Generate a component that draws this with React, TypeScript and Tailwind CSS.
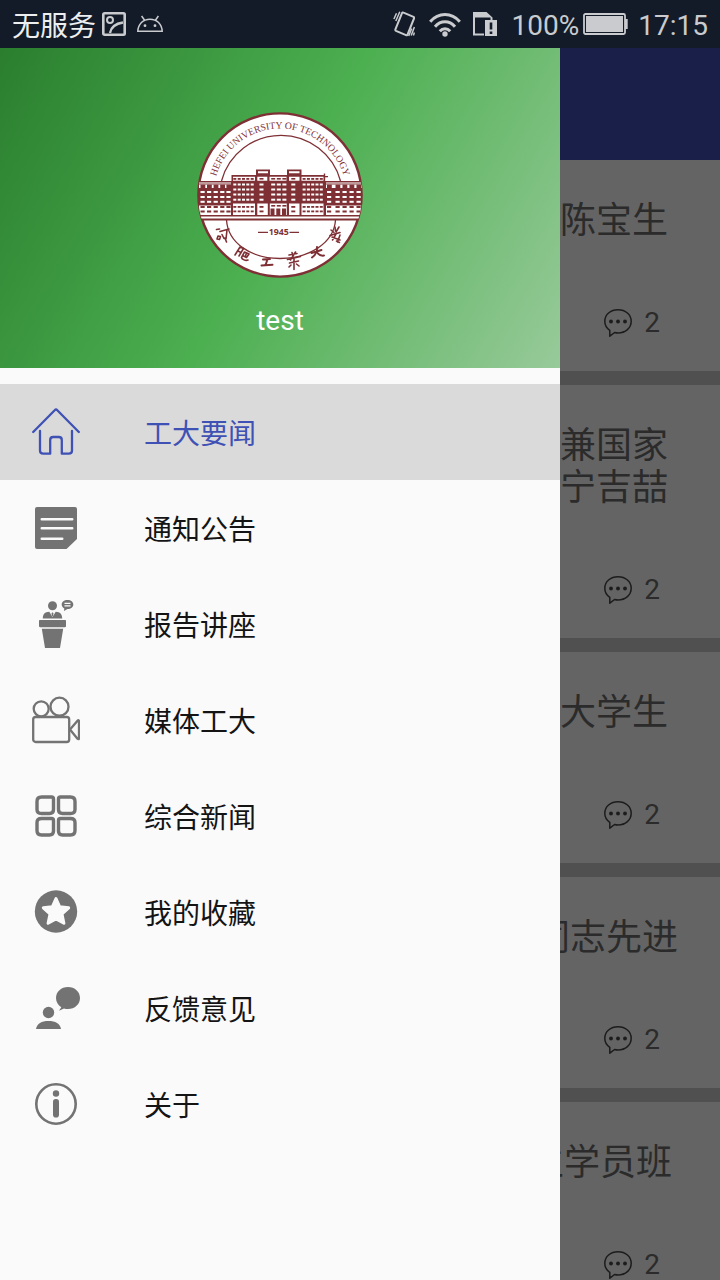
import React from 'react';

const INK = '#7f3035';

function SignalPicture() {
  return (
    <svg viewBox="0 0 24 24" className="size-6" fill="none" stroke="currentColor" strokeWidth="2.6">
      <rect x="1.3" y="1.3" width="21.4" height="21.4" rx="1.2" />
      <circle cx="8" cy="8" r="3" strokeWidth="2" />
      <path d="M8 21C9 15.500 14 11.500 21 10.500" strokeWidth="2.400" />
    </svg>
  );
}

function AndroidHead() {
  return (
    <svg viewBox="0 0 26 18" className="h-[18px] w-[26px]" fill="none" stroke="currentColor" strokeWidth="1.5">
      <path d="M.8 16.3h24.4C24.800 9.200 20 4.200 13 4.200S1.200 9.200.8 16.300z" />
      <path d="M4.600 1l3 4.200M21.400 1l-3 4.200" />
      <circle cx="8" cy="10.700" r="1.400" fill="currentColor" stroke="none" />
      <circle cx="18" cy="10.700" r="1.400" fill="currentColor" stroke="none" />
    </svg>
  );
}

function Vibrate() {
  return (
    <svg viewBox="0 0 22 26" className="h-[26px] w-[22px]" fill="none" stroke="currentColor" strokeWidth="1.500">
      <path d="M10.500 1.600l10 4.200c.6.300.8.800.6 1.400l-6.600 16.400c-.3.700-.9.900-1.500.6l-10-4.400c-.6-.3-.8-.8-.6-1.400l6.600-16.200c.3-.7.900-.9 1.500-.6z" strokeWidth="2" />
      <path d="M6.800.8L2.800 10M3.500 2.300L.9 8M21.400 16l-3.200 8.500M18.700 17.500l-3 7.500M21.400 21.500l-1 3" />
    </svg>
  );
}

function Wifi() {
  return (
    <svg viewBox="0 0 32 25" className="h-[25px] w-8" fill="none" stroke="currentColor" strokeWidth="3">
      <path d="M1.200 9.800C9.500.2 22.500.2 30.800 9.800M6 14.800c5.700-6.600 14.300-6.600 20 0M10.800 19.300c3-3.500 7.400-3.500 10.400 0" />
      <circle cx="16" cy="22" r="2.700" fill="currentColor" stroke="none" />
    </svg>
  );
}

function SimAlert() {
  return (
    <svg viewBox="0 0 24 24" className="size-6">
      <path d="M0 0h13.500l6 5.500V9h-2V5.500H2v16h9V23.500H0z" fill="currentColor" />
      <rect x="12" y="8" width="12" height="16" fill="currentColor" />
      <path d="M18 10.500v7M18 19.500V22" stroke="#131b28" strokeWidth="2.600" />
    </svg>
  );
}

function Battery() {
  return (
    <svg viewBox="0 0 45 22" className="h-[22px] w-[45px]">
      <rect x="1" y="1" width="41" height="20" rx="1.500" fill="none" stroke="currentColor" strokeWidth="1.800" />
      <rect x="3" y="3" width="37" height="16" fill="currentColor" />
      <path d="M42 6h2.700v10H42z" fill="currentColor" />
    </svg>
  );
}

function StatusBar() {
  return (
    <header className="flex h-12 shrink-0 items-center bg-[#131b28] px-3 font-['Roboto',sans-serif] text-[28px] leading-8 text-[#c9cbce]">
      <span className="font-['Noto_Sans_CJK_SC',sans-serif] text-[#eceef0]">无服务</span>
      <span className="ml-1.5"><SignalPicture /></span>
      <span className="ml-[11px]"><AndroidHead /></span>
      <span className="ml-auto"><Vibrate /></span>
      <span className="ml-3.5"><Wifi /></span>
      <span className="ml-3"><SimAlert /></span>
      <span className="ml-[15px] pt-1">100%</span>
      <span className="ml-1"><Battery /></span>
      <time className="ml-2.5 pt-1">17:15</time>
    </header>
  );
}

/* The university seal, drawn on an 180-unit square. */
function Seal() {
  const cols = (xs: number[], ys: number[], w: number, h: number) =>
    ys.flatMap((y) => xs.map((x) => <rect key={`${x}-${y}`} x={x} y={y} width={w} height={h} />));
  const sides = [43.3, 47.7, 52, 56.3, 60.7, 112.6, 116.9, 121.2, 125.5, 129.8];
  const middle = [69.5, 81.2, 86.8, 92.4, 101.3];
  const wings = [10.5, 17, 23.600, 30.200, 36.400, 137, 145.500, 152.500, 159.500, 166.500];
  return (
    <svg viewBox="0 0 180 180" className="size-[180px]" role="img" aria-label="Hefei University of Technology">
      <defs>
        <path id="seal-arc" d="M23.500 90A66.500 66.500 0 0 1 156.500 90" />
        <clipPath id="seal-clip"><circle cx="90" cy="90" r="82" /></clipPath>
      </defs>
      <circle cx="90" cy="90" r="81.600" fill="#fff" stroke={INK} strokeWidth="2.400" />
      <g fill="none" stroke={INK} strokeWidth="1.300">
        <path d="M31.500 76A61.600 61.600 0 0 1 150.500 76" />
        <path d="M36.500 115C38 138 61 153.500 90 153.500S144 138 145.500 115" />
      </g>
      <text fill={INK} fontSize="9.700" fontFamily="Liberation Serif, serif" textAnchor="middle">
        <textPath href="#seal-arc" startOffset="50%">HEFEI UNIVERSITY OF TECHNOLOGY</textPath>
      </text>
      <g clipPath="url(#seal-clip)">
        <path d="M6 76h168v39.500H6z" fill={INK} />
        <g fill="#fff">
          <path d="M9 77.600h32v1H9zM136 77.600h36v1h-36z" />
          <path d="M9 79.600h32v3.400H9zM136 79.600h36v3.400h-36z" />
          {cols(wings, [86, 91, 95.800], 4.200, 2)}
          <path d="M9 100.500h32V110H9zM136 100.500h36V110h-36z" />
          <path d="M6 111.500h168v2H6z" />
        </g>
        <g fill={INK}>
          {cols(wings, [79.600], 4.800, 3.400)}
          {cols(wings, [101, 105.500], 4.200, 2)}
        </g>
      </g>
      <g fill={INK}>
        <path d="M41.500 70H135v41H41.500z" />
        <path d="M66 64.600h14v6H66zM97 64.600h14.500v6H97z" />
        <path d="M133.800 68.500h1.400v8h-1.400zM132 71h6v1.300h-6z" />
      </g>
      <g fill="#fff">
        <path d="M68 66.200h10v2H68zM99 66.200h10.500v2H99z" />
        <path d="M43 71.800h22v4H43zM67.300 71.800h10v4h-10zM79.500 71.800h17v4h-17zM99 71.800h10.500v4H99zM111.500 71.800h22v4h-22z" />
        {cols(sides, [78.500, 83.500, 88.500, 93.700], 3, 2)}
        {cols(middle, [78.500, 83.500, 88.500, 93.700], 4, 2)}
        <path d="M43 98.500h22V110H43zM67.300 98.500h10.500V110H67.300zM79.800 98.500h17V110h-17zM99 98.500h10.500V110H99zM111.500 98.500h22V110h-22z" />
      </g>
      <g fill={INK}>
        {cols(sides, [73, 101, 105.500], 3, 1.800)}
        {cols(middle, [73], 4, 1.600)}
        {cols([69.500, 101.300], [101, 105.500], 4, 1.800)}
        {cols([81.200, 86.800, 92.400], [100], 4, 1.600)}
        <path d="M80.500 103.500h4v7h-4zM86.300 103.500h4v7h-4zM92 103.500h4v7h-4z" />
      </g>
      <path d="M68 127.400h10M99.500 127.400h9.500" stroke={INK} strokeWidth="1.200" />
      <text x="88.700" y="130.300" textAnchor="middle" fontSize="8.800" fontWeight="700" fontFamily="Noto Sans, sans-serif" fill={INK}>1945</text>
      <g fill="none" stroke={INK} strokeWidth="1.600" strokeLinecap="round" strokeLinejoin="round">
        <path d="M26.500 124.500l3-.5M30 126.500l9-2.500M37 125l-1 9M35 133l1.500 4M28 131l-1 3 2.500.5 1-3zM32 129.500l2 4" />
        <path d="M50 142l-5 8M50 142l3.500 1.500L49 151M48 146l3 1.500M54.500 147l4.500 2-2.500 3.500-4-2M54.500 147l-3 5.500c.5 2 4 3.500 6.500 2.500M56.500 148l-1 3" />
        <path d="M73 154.500l7-.5M77.500 154.500l-2 5.500M71.500 160.500l11-.8" strokeWidth="2" />
        <path d="M99 150l8-1.500M102 147.500l1 4M97.500 154.500l13-3M99.500 158l9-2M105.500 147l-5 8M104 154v10.500M101 160l-2 2M106.500 159l2.500 2" />
        <path d="M121.500 148l10-3M127 142c.5 4-1.500 8-5 10.500M127 147.500c2 2.500 4.500 3.500 7 3" strokeWidth="2" />
        <path d="M141 125l3 2.500M145 122l.5 4M149 122l-3 5M140 130.500l10-3M146 129l-3.500 6M142 132l8 3M150 130l-2.500 7M146.500 136l3 1.500" />
      </g>
    </svg>
  );
}

function HomeIcon() {
  return (
    <svg viewBox="0 0 48 48" className="size-12" fill="none" stroke="currentColor" strokeWidth="2.300" strokeLinecap="round" strokeLinejoin="round">
      <path d="M1.200 24L22.700 2.200c.8-.8 1.800-.8 2.600 0L46.800 24" />
      <path d="M8 23v19.500c0 2 1.200 3.200 3.200 3.200h7V32c0-2 1-3 3-3h5.600c2 0 3 1 3 3v13.700h7c2 0 3.200-1.200 3.200-3.200V23" />
    </svg>
  );
}

function NoticeIcon() {
  return (
    <svg viewBox="0 0 48 48" className="size-12">
      <path d="M5 3h38a2 2 0 0 1 2 2v30L34.500 45H5a2 2 0 0 1-2-2V5a2 2 0 0 1 2-2z" fill="currentColor" />
      <path d="M9.800 15.200h30.400M9.800 24.200h30.400M9.800 34.800h20.400" stroke="#fafafa" strokeWidth="2.600" strokeLinecap="round" />
    </svg>
  );
}

function LectureIcon() {
  return (
    <svg viewBox="0 0 48 48" className="size-12" fill="currentColor">
      <circle cx="20.500" cy="5.700" r="4.500" />
      <path d="M10.800 18.500c0-4.500 2-6.500 6.500-6.800l3.200 5.300 3.200-5.300c4.500.3 6.500 2.300 6.500 6.800z" />
      <path d="M20.500 12.300l-1 1 .5 3h1l.5-3z" />
      <path d="M8 20h25c.6 0 1 .4 1 1v5c0 .8-.4 1.200-1 1.200H8c-.6 0-1-.4-1-1.200v-5c0-.6.400-1 1-1zM9.800 28.700h21.400L28 48H13z" />
      <path d="M35.500 0C39 0 41.300 1.900 41.300 4.500S39 9 35.500 9L32 11l.3-2.500C30.700 7.700 29.700 6.300 29.700 4.500 29.700 1.900 32 0 35.500 0z" />
      <path d="M32.500 3.300h6M32.500 5.800h6" stroke="#fafafa" strokeWidth="1.200" />
    </svg>
  );
}

function CameraIcon() {
  return (
    <svg viewBox="0 0 48 48" className="size-12" fill="none" stroke="currentColor" strokeWidth="2.300" strokeLinejoin="round">
      <circle cx="9.200" cy="12.800" r="7.500" />
      <circle cx="27.500" cy="10.700" r="9" />
      <rect x="1.200" y="21" width="36" height="25" rx="2.500" />
      <path d="M38 33.500l7.500-8.800c.8-.8 1.500-.4 1.500.5v17c0 1-.7 1.300-1.500.5z" />
    </svg>
  );
}

function GridIcon() {
  return (
    <svg viewBox="0 0 48 48" className="size-12" fill="none" stroke="currentColor" strokeWidth="3.400" strokeLinejoin="round">
      <path d="M9.500 5h10c1.300 0 2 .7 2 2v10.500c0 2.500-1.500 4-4 4h-8c-3 0-4.500-1.500-4.500-4v-8C5 6.500 6.500 5 9.500 5z" />
      <path d="M38.500 5h-10c-1.300 0-2 .7-2 2v10.500c0 2.500 1.500 4 4 4h8c3 0 4.500-1.500 4.500-4v-8C43 6.500 41.500 5 38.500 5z" />
      <path d="M9.500 43h8c2.500 0 4-1.500 4-4V28.500c0-1.300-.7-2-2-2h-10c-3 0-4.500 1.500-4.500 4v8c0 3 1.500 4.500 4.500 4.500z" />
      <path d="M38.500 43h-8c-2.500 0-4-1.500-4-4V28.500c0-1.300.7-2 2-2h10c3 0 4.500 1.500 4.500 4v8c0 3-1.500 4.500-4.500 4.500z" />
    </svg>
  );
}

function StarIcon() {
  return (
    <svg viewBox="0 0 48 48" className="size-12">
      <circle cx="24" cy="23.500" r="21.200" fill="currentColor" />
      <path d="M24 10.500l3.700 8.300 9 1-6.700 6.200 1.900 9.200L24 31l-7.900 4.200 1.900-9.200-6.700-6.200 9-1z" fill="#fafafa" stroke="#fafafa" strokeWidth="3" strokeLinejoin="round" />
    </svg>
  );
}

function FeedbackIcon() {
  return (
    <svg viewBox="0 0 48 48" className="size-12" fill="currentColor">
      <circle cx="16.500" cy="28.500" r="5.700" />
      <path d="M4 45c1-5.500 5.500-8 12.500-8S28 39.500 29 45z" />
      <path d="M36 3c6.800 0 12 4.700 12 11s-5.200 11-12 11c-1.500 0-2.800-.2-4-.6L27 26.800l2.300-3.600C26 21.200 24 18 24 14 24 7.700 29.200 3 36 3z" />
    </svg>
  );
}

function InfoIcon() {
  return (
    <svg viewBox="0 0 48 48" className="size-12" fill="currentColor">
      <circle cx="24" cy="24" r="19.700" fill="none" stroke="currentColor" strokeWidth="2.600" />
      <circle cx="24" cy="13.500" r="3.200" />
      <rect x="21" y="19" width="6" height="18.500" rx="2.800" />
    </svg>
  );
}

function CommentIcon() {
  return (
    <svg viewBox="0 0 28 28" className="size-7" fill="none" stroke="currentColor" strokeWidth="1.500" strokeLinejoin="round">
      <path d="M14 .8c7.500 0 13.200 4.800 13.200 11.500S21.500 24 14 24c-1.200 0-2.300-.2-3.400-.5L5.800 27.200v-5.800C2.700 19.300.8 16.200.8 12.300.8 5.600 6.500.8 14 .8z" />
      <g fill="currentColor" stroke="none">
        <circle cx="7" cy="12.500" r="1.900" />
        <circle cx="14" cy="12.500" r="1.900" />
        <circle cx="21" cy="12.500" r="1.900" />
      </g>
    </svg>
  );
}

const menu = [
  { label: '工大要闻', Icon: HomeIcon },
  { label: '通知公告', Icon: NoticeIcon },
  { label: '报告讲座', Icon: LectureIcon },
  { label: '媒体工大', Icon: CameraIcon },
  { label: '综合新闻', Icon: GridIcon },
  { label: '我的收藏', Icon: StarIcon },
  { label: '反馈意见', Icon: FeedbackIcon },
  { label: '关于', Icon: InfoIcon },
];

const news = [
  { lines: ['陈宝生'], inset: 'pr-[52px]' },
  { lines: ['兼国家', '宁吉喆'], inset: 'pr-[52px]' },
  { lines: ['大学生'], inset: 'pr-[52px]' },
  { lines: ['同志先进'], inset: 'pr-[42px]' },
  { lines: ['生学员班'], inset: 'pr-12' },
];

export default function App() {
  return (
    <div className="flex h-screen flex-col overflow-hidden font-['Noto_Sans_CJK_SC',sans-serif]">
      <StatusBar />
      <div className="flex min-h-0 flex-1">
        <aside className="flex w-7/9 shrink-0 flex-col bg-[#fafafa]">
          <div className="flex h-80 shrink-0 flex-col items-center bg-linear-[120deg,#2a7e2e,#4caf50_50%,#98ca9a] pt-[57px]">
            <Seal />
            <p className="mt-5 font-['Roboto',sans-serif] text-[28px] leading-8 text-white">test</p>
          </div>
          <nav className="mt-4 flex flex-col">
            {menu.map(({ label, Icon }, i) => (
              <button
                key={label}
                type="button"
                aria-current={i === 0 ? 'page' : undefined}
                className={`flex h-24 items-center gap-16 px-8 text-left ${i === 0 ? 'bg-[#dadada] text-[#3f51b5]' : 'text-[#737373]'}`}
              >
                <Icon />
                <span className={`text-[28px] leading-8 ${i === 0 ? '' : 'text-[#141414]'}`}>{label}</span>
              </button>
            ))}
          </nav>
        </aside>
        <main className="flex min-w-0 flex-1 flex-col overflow-hidden bg-[#505050] text-[#2b2b2b]">
          <div className="h-28 shrink-0 bg-[#191f48]" />
          <div className="flex flex-col gap-3.5">
            {news.map(({ lines, inset }) => (
              <article key={lines[0]} className="flex flex-col overflow-hidden bg-[#646464] pt-9 pb-8">
                <h2 className={`flex flex-col items-end text-4xl leading-[42px] whitespace-nowrap ${inset}`}>
                  {lines.map((line) => (
                    <span key={line} className="leading-[42px]">{line}</span>
                  ))}
                </h2>
                <div className="mt-[69px] flex h-8 items-center justify-end gap-3 pr-[60px] font-['Roboto',sans-serif] text-[28px] leading-8">
                  <span className="text-[#1c1c1c]"><CommentIcon /></span>
                  <span>2</span>
                </div>
              </article>
            ))}
          </div>
        </main>
      </div>
    </div>
  );
}
